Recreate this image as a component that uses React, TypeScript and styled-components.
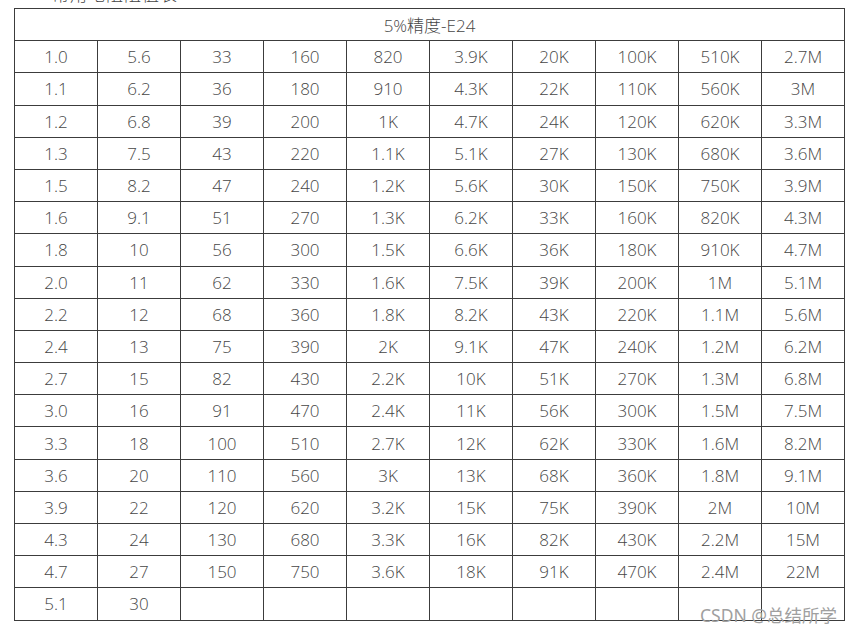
import styled, { createGlobalStyle } from "styled-components";

const GlobalStyle = createGlobalStyle`
  html, body {
    margin: 0;
    padding: 0;
    background: #ffffff;
  }
  body {
    font-family: "Open Sans", "Noto Sans CJK SC", sans-serif;
  }
`;

const Page = styled.div`
  position: relative;
  width: 853px;
  height: 636px;
  overflow: hidden;
  padding: 8px 0 0 14px;
  box-sizing: border-box;
`;

const Caption = styled.div`
  position: absolute;
  left: 52px;
  top: -19px;
  font-size: 17px;
  color: #444;
  font-weight: 300;
  letter-spacing: 1px;
`;

const Table = styled.table`
  border-collapse: collapse;
  width: 831px;
  table-layout: fixed;
`;

const HeadCell = styled.th`
  border: 1px solid #3c3c3c;
  font-weight: 300;
  font-size: 17px;
  color: #464646;
  text-align: center;
  padding: 0;
  height: 31.2px;
`;

const Cell = styled.td`
  border: 1px solid #3c3c3c;
  font-weight: 300;
  font-size: 17px;
  color: #464646;
  text-align: center;
  padding: 0;
  height: 31.2px;
`;

const Watermark = styled.div`
  position: absolute;
  left: 700px;
  top: 602px;
  font-family: "Noto Sans", "Noto Sans CJK SC", sans-serif;
  font-size: 17.5px;
  color: #a0a0a0;
  white-space: nowrap;
`;

const columns: string[][] = [
  ["1.0", "1.1", "1.2", "1.3", "1.5", "1.6", "1.8", "2.0", "2.2", "2.4", "2.7", "3.0", "3.3", "3.6", "3.9", "4.3", "4.7", "5.1"],
  ["5.6", "6.2", "6.8", "7.5", "8.2", "9.1", "10", "11", "12", "13", "15", "16", "18", "20", "22", "24", "27", "30"],
  ["33", "36", "39", "43", "47", "51", "56", "62", "68", "75", "82", "91", "100", "110", "120", "130", "150", ""],
  ["160", "180", "200", "220", "240", "270", "300", "330", "360", "390", "430", "470", "510", "560", "620", "680", "750", ""],
  ["820", "910", "1K", "1.1K", "1.2K", "1.3K", "1.5K", "1.6K", "1.8K", "2K", "2.2K", "2.4K", "2.7K", "3K", "3.2K", "3.3K", "3.6K", ""],
  ["3.9K", "4.3K", "4.7K", "5.1K", "5.6K", "6.2K", "6.6K", "7.5K", "8.2K", "9.1K", "10K", "11K", "12K", "13K", "15K", "16K", "18K", ""],
  ["20K", "22K", "24K", "27K", "30K", "33K", "36K", "39K", "43K", "47K", "51K", "56K", "62K", "68K", "75K", "82K", "91K", ""],
  ["100K", "110K", "120K", "130K", "150K", "160K", "180K", "200K", "220K", "240K", "270K", "300K", "330K", "360K", "390K", "430K", "470K", ""],
  ["510K", "560K", "620K", "680K", "750K", "820K", "910K", "1M", "1.1M", "1.2M", "1.3M", "1.5M", "1.6M", "1.8M", "2M", "2.2M", "2.4M", ""],
  ["2.7M", "3M", "3.3M", "3.6M", "3.9M", "4.3M", "4.7M", "5.1M", "5.6M", "6.2M", "6.8M", "7.5M", "8.2M", "9.1M", "10M", "15M", "22M", ""],
];

const rows = columns[0].map((_, r) => columns.map((c) => c[r]));

export default function App() {
  return (
    <>
      <GlobalStyle />
      <Page>
        <Caption>常用电阻阻值表</Caption>
        <Table>
          <thead>
            <tr>
              <HeadCell colSpan={10}>5%精度-E24</HeadCell>
            </tr>
          </thead>
          <tbody>
            {rows.map((row, i) => (
              <tr key={i}>
                {row.map((v, j) => (
                  <Cell key={j}>{v}</Cell>
                ))}
              </tr>
            ))}
          </tbody>
        </Table>
        <Watermark>CSDN @总结所学</Watermark>
      </Page>
    </>
  );
}
